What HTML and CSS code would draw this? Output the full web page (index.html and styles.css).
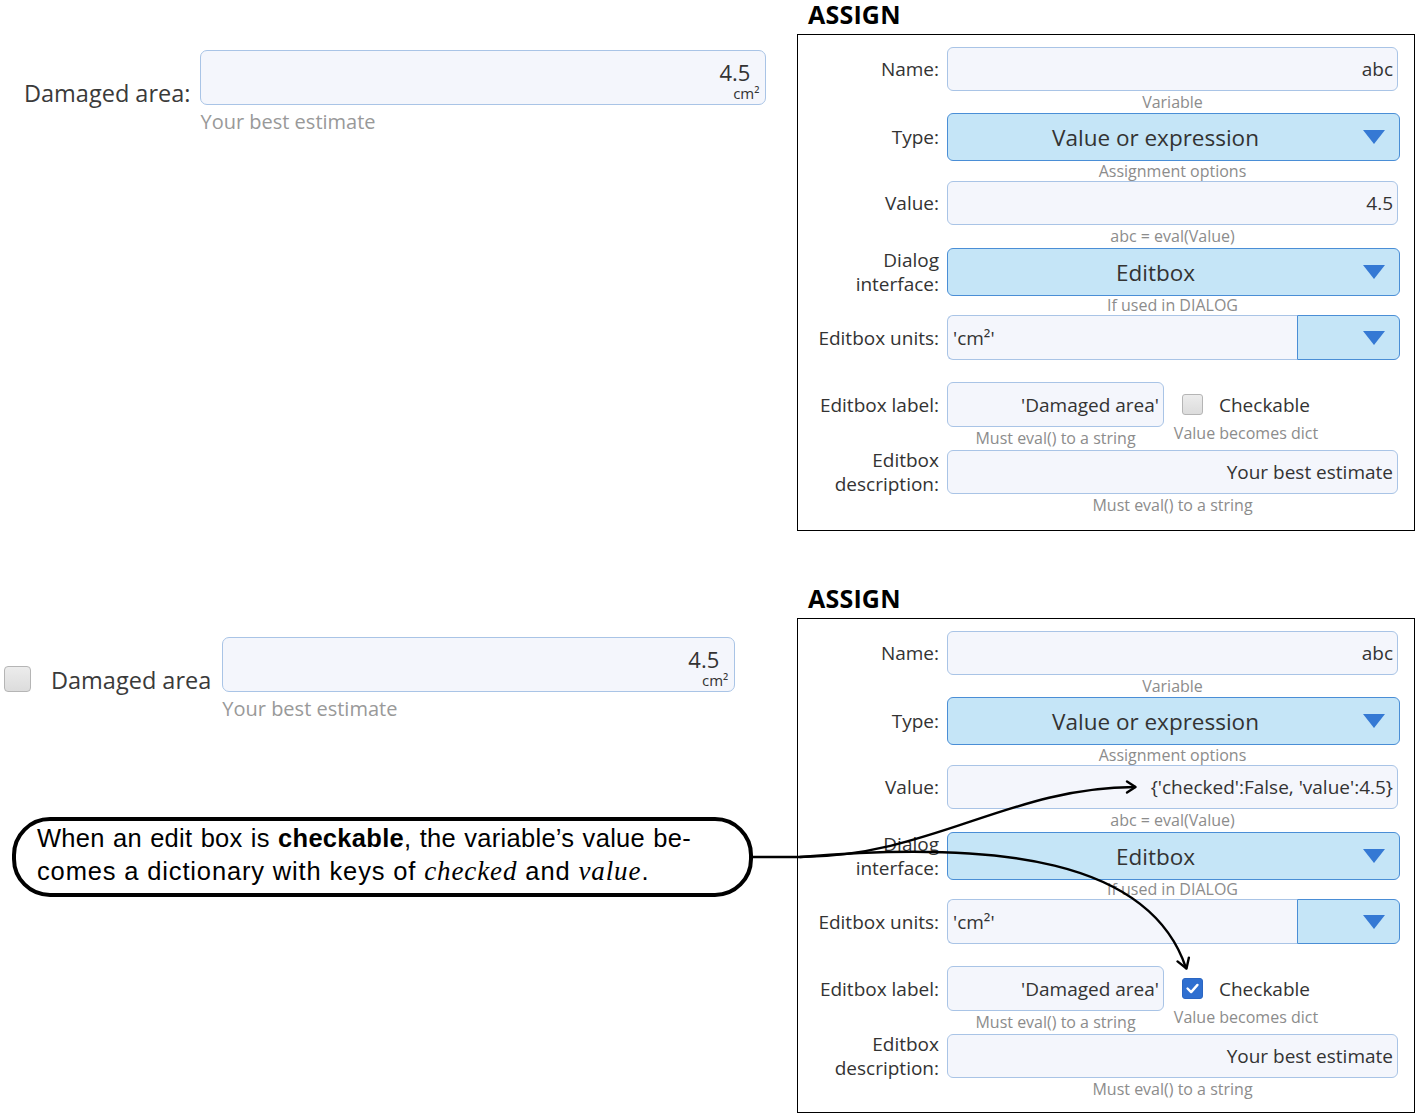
FILE: index.html
```html
<!DOCTYPE html>
<html>
<head>
<meta charset="utf-8">
<title>Assign editbox</title>
<link rel="stylesheet" href="styles.css">
</head>
<body>
<section class="sec">
  <div class="demo demo-1">
    <div class="eb">
      <div class="eb-label">Damaged area:</div>
      <div class="eb-field">
        <div class="eb-input eb-input-1"><span class="eb-val">4.5</span><span class="eb-unit">cm²</span></div>
        <div class="eb-desc">Your best estimate</div>
      </div>
    </div>
  </div>
  <div class="assign">
    <h2 class="assign-title">ASSIGN</h2>
    <div class="panel">
      <div class="row"><div class="lbl">Name:</div><div class="inp">abc</div></div>
      <div class="cap cap-name">Variable</div>
      <div class="row"><div class="lbl">Type:</div><div class="sel"><span class="sel-text">Value or expression</span><svg class="tri" viewBox="0 0 22 14"><path d="M0 0H22L11 14Z"/></svg></div></div>
      <div class="cap cap-type">Assignment options</div>
      <div class="row"><div class="lbl">Value:</div><div class="inp">4.5</div></div>
      <div class="cap cap-value">abc = eval(Value)</div>
      <div class="row"><div class="lbl lbl-2">Dialog<br>interface:</div><div class="sel"><span class="sel-text">Editbox</span><svg class="tri" viewBox="0 0 22 14"><path d="M0 0H22L11 14Z"/></svg></div></div>
      <div class="cap cap-dialog">If used in DIALOG</div>
      <div class="row row-units"><div class="lbl">Editbox units:</div><div class="combo"><div class="inp inp-left">'cm²'</div><div class="combo-btn"><svg class="tri" viewBox="0 0 22 14"><path d="M0 0H22L11 14Z"/></svg></div></div></div>
      <div class="row row-label"><div class="lbl">Editbox label:</div><div class="label-ctrl"><div class="inp inp-short">'Damaged area'</div><div class="chk-wrap"><span class="chk"></span><span class="chk-text">Checkable</span></div></div></div>
      <div class="cap-row"><span class="cap-l">Must eval() to a string</span><span class="cap-r">Value becomes dict</span></div>
      <div class="row"><div class="lbl lbl-2">Editbox<br>description:</div><div class="inp">Your best estimate</div></div>
      <div class="cap cap-desc">Must eval() to a string</div>
    </div>
  </div>
</section>

<section class="sec">
  <div class="demo demo-2">
    <div class="eb">
      <span class="eb-chk"></span>
      <div class="eb-label eb-label-2">Damaged area</div>
      <div class="eb-field">
        <div class="eb-input eb-input-2"><span class="eb-val">4.5</span><span class="eb-unit">cm²</span></div>
        <div class="eb-desc">Your best estimate</div>
      </div>
    </div>
    <div class="callout">
      <div class="callout-line callout-justify">When an edit box is <b>checkable</b>, the variable’s value be-</div>
      <div class="callout-line">comes a dictionary with keys of <i class="math">checked</i> and <i class="math">value</i>.</div>
    </div>
  </div>
  <div class="assign">
    <h2 class="assign-title">ASSIGN</h2>
    <div class="panel panel-short">
      <div class="row"><div class="lbl">Name:</div><div class="inp">abc</div></div>
      <div class="cap cap-name">Variable</div>
      <div class="row"><div class="lbl">Type:</div><div class="sel"><span class="sel-text">Value or expression</span><svg class="tri" viewBox="0 0 22 14"><path d="M0 0H22L11 14Z"/></svg></div></div>
      <div class="cap cap-type">Assignment options</div>
      <div class="row"><div class="lbl">Value:</div><div class="inp">{'checked':False, 'value':4.5}</div></div>
      <div class="cap cap-value">abc = eval(Value)</div>
      <div class="row"><div class="lbl lbl-2">Dialog<br>interface:</div><div class="sel"><span class="sel-text">Editbox</span><svg class="tri" viewBox="0 0 22 14"><path d="M0 0H22L11 14Z"/></svg></div></div>
      <div class="cap cap-dialog">If used in DIALOG</div>
      <div class="row row-units"><div class="lbl">Editbox units:</div><div class="combo"><div class="inp inp-left">'cm²'</div><div class="combo-btn"><svg class="tri" viewBox="0 0 22 14"><path d="M0 0H22L11 14Z"/></svg></div></div></div>
      <div class="row row-label"><div class="lbl">Editbox label:</div><div class="label-ctrl"><div class="inp inp-short">'Damaged area'</div><div class="chk-wrap"><span class="chk chk-on"><svg viewBox="0 0 21 21"><path d="M5 10.5L9 14.5L16 6.5"/></svg></span><span class="chk-text">Checkable</span></div></div></div>
      <div class="cap-row"><span class="cap-l">Must eval() to a string</span><span class="cap-r">Value becomes dict</span></div>
      <div class="row"><div class="lbl lbl-2">Editbox<br>description:</div><div class="inp">Your best estimate</div></div>
      <div class="cap cap-desc">Must eval() to a string</div>
    </div>
  </div>
</section>

<svg class="arrows" viewBox="0 0 1416 1114">
  <path class="wire" d="M753 857L800 857C930 857 1010 787 1135 787"/>
  <path class="wire" d="M1127 781.5L1135.5 787L1127 792.5"/>
  <path class="wire" d="M800 857C1000 840 1150 860 1186 968"/>
  <path class="wire" d="M1177.5 961.4L1186.5 968.5L1188.9 957.6"/>
</svg>
</body>
</html>
```

FILE: styles.css
```css
html, body {
  margin: 0;
  padding: 0;
}
body {
  position: relative;
  width: 1416px;
  height: 1114px;
  overflow: hidden;
  background: #fff;
  font-family: "Open Sans", "Noto Sans", sans-serif;
  color: #333;
}

.sec {
  display: flex;
  height: 584px;
}

.demo {
  width: 797px;
  box-sizing: border-box;
}
.demo-1 {
  padding: 50px 0 0 24px;
}
.demo-2 {
  padding: 53px 0 0 4px;
}

/* Editbox demo */
.eb {
  display: flex;
  align-items: flex-start;
}
.eb-label {
  margin-top: 28px;
  margin-right: 10px;
  font-size: 23.5px;
  line-height: 30px;
  color: #3a3a3a;
  white-space: nowrap;
}
.eb-label-2 {
  margin-right: 11px;
}
.eb-chk {
  width: 27px;
  height: 26px;
  margin-top: 29px;
  margin-right: 20px;
  box-sizing: border-box;
  border: 1px solid #b5b5b5;
  border-radius: 4px;
  background: linear-gradient(#ececec, #dcdcdc);
}
.eb-input {
  height: 55px;
  box-sizing: border-box;
  border: 1px solid #a9c4e6;
  border-radius: 7px;
  background: #f4f6fc;
  display: flex;
  flex-direction: column;
  align-items: flex-end;
  padding: 9px 6px 0 0;
}
.eb-input-1 {
  width: 566px;
}
.eb-input-2 {
  width: 513px;
}
.eb-val {
  font-size: 22px;
  line-height: 24px;
  margin-right: 9px;
  color: #333;
}
.eb-unit {
  font-size: 15px;
  line-height: 18px;
  color: #333;
}
.eb-desc {
  margin-top: 4px;
  font-size: 20px;
  line-height: 26px;
  color: #999;
}

/* Callout */
.callout {
  margin: 95px 0 0 8px;
  width: 741px;
  height: 80px;
  box-sizing: border-box;
  border: 4px solid #000;
  border-radius: 38px;
  padding: 1px 0 0 21px;
  color: #000;
  font-family: "Liberation Sans", Arial, sans-serif;
  font-size: 25.5px;
  letter-spacing: 0.85px;
}
.callout-line {
  width: 654px;
  line-height: 33px;
  white-space: nowrap;
}
.callout-justify {
  text-align: justify;
  text-align-last: justify;
  letter-spacing: 0.3px;
}
.callout b {
  font-weight: bold;
}
.math {
  font-family: "Liberation Serif", "Times New Roman", serif;
  font-style: italic;
  font-size: 27px;
  letter-spacing: 0.9px;
}

/* ASSIGN panel */
.assign {
  width: 618px;
}
.assign-title {
  margin: 0;
  height: 34px;
  padding-left: 11px;
  font-size: 25px;
  line-height: 29px;
  font-weight: bold;
  color: #000;
  letter-spacing: 0.2px;
}
.panel {
  height: 497px;
  box-sizing: border-box;
  border: 1px solid #000;
  padding: 12px 16px 0 0;
}
.panel-short {
  height: 495px;
}
.row {
  display: grid;
  grid-template-columns: 141px 1fr;
  column-gap: 8px;
  align-items: center;
}
.lbl {
  text-align: right;
  font-size: 19px;
  line-height: 24px;
  color: #333;
  white-space: nowrap;
}
.lbl-2 {
  height: 44px;
  display: flex;
  flex-direction: column;
  justify-content: center;
}
.inp {
  height: 44px;
  box-sizing: border-box;
  border: 1px solid #a9c4e6;
  border-radius: 6px;
  background: #f4f6fc;
  display: flex;
  align-items: center;
  justify-content: flex-end;
  padding: 0 4px;
  font-size: 19px;
  color: #333;
  white-space: nowrap;
}
.sel {
  height: 48px;
  margin-right: -2px;
  box-sizing: border-box;
  border: 1px solid #4a8ed6;
  border-radius: 6px;
  background: #c5e5f7;
  display: flex;
  align-items: center;
  font-size: 22.5px;
  color: #333;
}
.sel-text {
  flex: 1;
  text-align: center;
}
.tri {
  width: 22px;
  height: 14px;
  margin-right: 14px;
  fill: #3579d4;
}

.row-units .combo {
  display: flex;
  height: 45px;
  margin-right: -2px;
}
.row-units {
  margin-bottom: 22px;
}
.inp-left {
  flex: 1;
  height: 45px;
  justify-content: flex-start;
  padding-left: 5px;
  border-radius: 6px 0 0 6px;
  border-right: none;
}
.combo-btn {
  width: 103px;
  height: 45px;
  box-sizing: border-box;
  border: 1px solid #4a8ed6;
  border-radius: 0 6px 6px 0;
  background: #c5e5f7;
  display: flex;
  align-items: center;
  justify-content: flex-end;
}

.label-ctrl {
  display: flex;
  align-items: center;
}
.inp-short {
  width: 217px;
  height: 45px;
  padding-right: 4px;
}
.chk-wrap {
  display: flex;
  align-items: center;
  margin-left: 18px;
}
.chk {
  width: 21px;
  height: 21px;
  box-sizing: border-box;
  border: 1px solid #b5b5b5;
  border-radius: 3px;
  background: linear-gradient(#ececec, #dcdcdc);
  margin-right: 16px;
  display: flex;
}
.chk-on {
  border-color: #2b66c2;
  background: #2f6fd0;
}
.chk-on svg {
  width: 19px;
  height: 19px;
  fill: none;
  stroke: #fff;
  stroke-width: 2.6;
  stroke-linecap: round;
  stroke-linejoin: round;
}
.chk-text {
  font-size: 19px;
  color: #333;
}

.cap {
  margin-left: 149px;
  text-align: center;
  font-size: 16px;
  color: #8c8c8c;
  white-space: nowrap;
}
.cap-name { height: 22px; line-height: 22px; }
.cap-type { height: 20px; line-height: 20px; }
.cap-value { height: 23px; line-height: 23px; }
.cap-dialog { height: 19px; line-height: 19px; }
.cap-desc { height: 22px; line-height: 22px; }

.cap-row {
  display: flex;
  height: 23px;
  margin-left: 149px;
  font-size: 16px;
  color: #8c8c8c;
  white-space: nowrap;
}
.cap-l {
  width: 217px;
  text-align: center;
  line-height: 23px;
}
.cap-r {
  width: 148px;
  margin-left: 8px;
  text-align: center;
  line-height: 13px;
}

/* Connector overlay */
.arrows {
  position: absolute;
  left: 0;
  top: 0;
  width: 1416px;
  height: 1114px;
  pointer-events: none;
}
.wire {
  fill: none;
  stroke: #000;
  stroke-width: 2.4;
  stroke-linecap: round;
  stroke-linejoin: round;
}
```
